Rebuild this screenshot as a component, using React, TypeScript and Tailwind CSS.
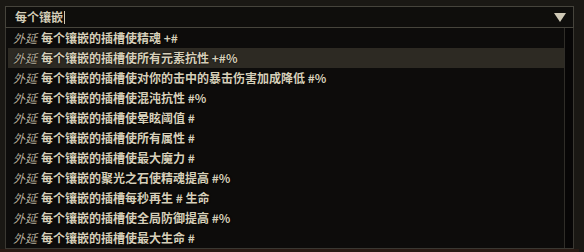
const items: { text: string; active?: boolean }[] = [
  { text: '每个镶嵌的插槽使精魂 +#' },
  { text: '每个镶嵌的插槽使所有元素抗性 +#%', active: true },
  { text: '每个镶嵌的插槽使对你的击中的暴击伤害加成降低 #%' },
  { text: '每个镶嵌的插槽使混沌抗性 #%' },
  { text: '每个镶嵌的插槽使晕眩阈值 #' },
  { text: '每个镶嵌的插槽使所有属性 #' },
  { text: '每个镶嵌的插槽使最大魔力 #' },
  { text: '每个镶嵌的聚光之石使精魂提高 #%' },
  { text: '每个镶嵌的插槽每秒再生 # 生命' },
  { text: '每个镶嵌的插槽使全局防御提高 #%' },
  { text: '每个镶嵌的插槽使最大生命 #' },
]

const font = "font-['Noto_Sans_CJK_SC','Noto_Sans',sans-serif]"

export default function App() {
  return (
    <div
      className={`w-[584px] h-[252px] overflow-hidden bg-[#1a1814] flex flex-col pl-[5px] pr-[10px] pt-[6px] ${font}`}
    >
      {/* Search input */}
      <div className="h-[22px] flex-shrink-0 flex items-center border border-[#46443c] bg-[#0f0e0c] pl-[9px] pr-[6px]">
        <span className="text-[12px] font-bold leading-none text-[#d3ccb6] [text-shadow:0_0_2px_#000]">
          每个镶嵌
        </span>
        <span className="w-px h-[13px] bg-[#cfc8b4] ml-[1px]" />
        <span className="flex-1" />
        <svg width="12" height="9" viewBox="0 0 12 9" className="mr-[1px]">
          <path d="M0 0 H12 L6 9 Z" fill="#cfc9b6" />
        </svg>
      </div>

      {/* Dropdown list */}
      <div className="h-[221px] flex-shrink-0 flex border-x border-b border-[#3a3832] bg-[#0d0c0b]">
        <div className="flex-1 flex flex-col pl-[2px]">
          {items.map((item) => (
            <div
              key={item.text}
              className={`h-[20px] flex items-center pl-[5px] text-[12px] font-bold leading-none whitespace-pre [text-shadow:0_0_2px_#000] ${
                item.active ? 'bg-[#2d2a23]' : ''
              }`}
            >
              <span className="italic font-normal text-[#b3ac9b] mr-[4px]">外延</span>
              <span className="text-[#d6cfb9]">{item.text}</span>
            </div>
          ))}
        </div>
        {/* Scrollbar track */}
        <div className="w-[9px] flex-shrink-0 border-l border-[#2f2d28] bg-[#070606]" />
      </div>
      <div className="flex-1 bg-[#2a1a14] -mx-[5px]" />
    </div>
  )
}
